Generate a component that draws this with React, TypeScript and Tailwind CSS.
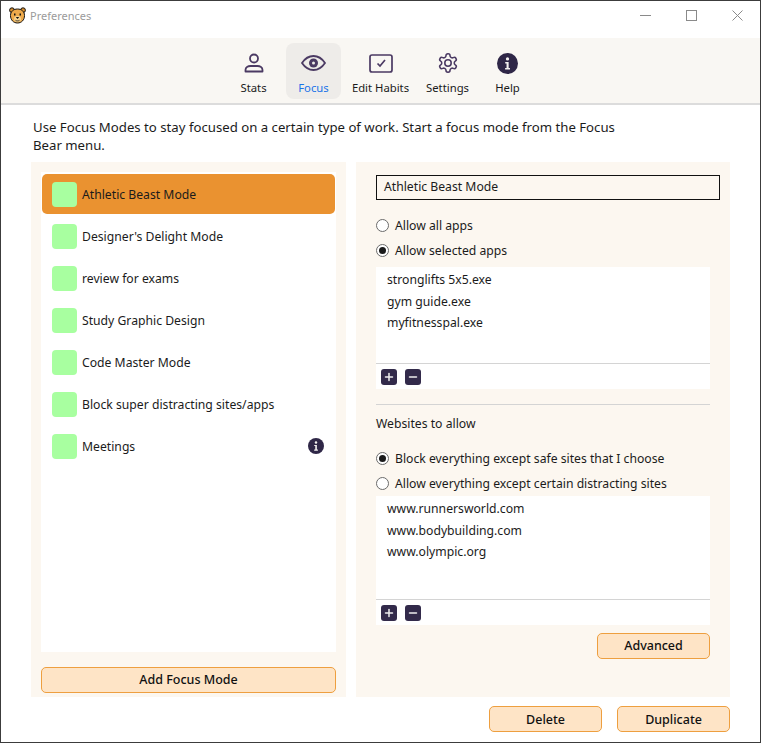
import React from 'react';
import { Minus, Plus } from 'lucide-react';

const MODES = [
  'Athletic Beast Mode',
  "Designer's Delight Mode",
  'review for exams',
  'Study Graphic Design',
  'Code Master Mode',
  'Block super distracting sites/apps',
  'Meetings',
];

const APPS = ['stronglifts 5x5.exe', 'gym guide.exe', 'myfitnesspal.exe'];
const SITES = ['www.runnersworld.com', 'www.bodybuilding.com', 'www.olympic.org'];

function BearLogo() {
  return (
    <svg width="17" height="17" viewBox="0 0 17 17" className="shrink-0">
      <circle cx="3" cy="3.200" r="2.400" fill="#d98f2e" stroke="#111" strokeWidth="1" />
      <circle cx="14" cy="3.200" r="2.400" fill="#d98f2e" stroke="#111" strokeWidth="1" />
      <path d="M1.500 8.500c0-4 3-6.500 7-6.500s7 2.500 7 6.500c0 4.500-3 7.500-7 7.500s-7-3-7-7.500z" fill="#eda94a" stroke="#111" strokeWidth="1" />
      <ellipse cx="8.500" cy="12" rx="3.500" ry="3" fill="#f6d28e" />
      <rect x="5" y="6.500" width="1.500" height="2" fill="#111" />
      <rect x="10.500" y="6.500" width="1.500" height="2" fill="#111" />
      <path d="M6.800 10h3.400l-1.700 2z" fill="#111" />
      <path d="M6.500 13.300c1 .8 3 .8 4 0" fill="none" stroke="#111" strokeWidth="0.800" />
    </svg>
  );
}

function InfoDot({ size, className }: { size: number; className?: string }) {
  return (
    <svg width={size} height={size} viewBox="0 0 22 22" className={className}>
      <circle cx="11" cy="11" r="11" fill="#2f2747" />
      <circle cx="11" cy="6.200" r="1.700" fill="#f4f2f0" />
      <path d="M8.600 9.500h3.600v6.300h1.400v1.600H8.500v-1.600h1.500v-4.700H8.600z" fill="#f4f2f0" />
    </svg>
  );
}

function ToolbarItem({ label, active, wide, children }: { label: string; active?: boolean; wide?: boolean; children: React.ReactNode }) {
  return (
    <div
      className={`flex h-[56px] flex-col items-center rounded-lg pt-[6px] ${wide ? 'w-[69px]' : 'w-[55px]'} ${active ? 'bg-[#eeece9] text-[#1a73e8]' : 'text-[#1b1b1b]'}`}
    >
      <div className="flex h-[28px] items-center justify-center">{children}</div>
      <span className="mt-[3px] text-[11.300px] leading-[16px]">{label}</span>
    </div>
  );
}

function Radio({ checked, label }: { checked?: boolean; label: string }) {
  return (
    <label className="flex h-[25px] items-center gap-[6px]">
      <span className="flex h-[13px] w-[13px] shrink-0 items-center justify-center rounded-full border border-[#6b6b6b] bg-white">
        {checked && <span className="h-[7px] w-[7px] rounded-full bg-[#1a1a1a]" />}
      </span>
      <span className="pt-[2px]">{label}</span>
    </label>
  );
}

function SmallButton({ minus }: { minus?: boolean }) {
  return (
    <span className="flex h-[16px] w-[16px] items-center justify-center rounded-[3px] bg-[#322a4a] text-[#eeeeee]">
      {minus ? <Minus size={12} strokeWidth={3} /> : <Plus size={12} strokeWidth={3} />}
    </span>
  );
}

function PickList({ items, height }: { items: string[]; height: string }) {
  return (
    <div className={`flex flex-col bg-white ${height}`}>
      <div className="flex-1 px-[11px] pt-[2px] leading-[21.500px]">
        {items.map((item) => (
          <div key={item}>{item}</div>
        ))}
      </div>
      <div className="flex h-[26px] items-center gap-[8px] border-t border-[#d4d4d4] pl-[5px]">
        <SmallButton />
        <SmallButton minus />
      </div>
    </div>
  );
}

function ActionButton({ label, className }: { label: string; className?: string }) {
  return (
    <button className={`h-[26px] rounded-[5px] border border-[#ee9f3f] bg-[#fee4c6] text-[12.500px] font-medium text-[#111] ${className ?? ''}`}>
      {label}
    </button>
  );
}

export default function App() {
  return (
    <div
      className="relative flex h-[743px] w-[761px] flex-col overflow-hidden border border-[#3c3c3c] bg-white text-[12.200px] text-[#1b1b1b]"
      style={{ fontFamily: '"Noto Sans", "Open Sans", sans-serif' }}
    >
      <div className="absolute top-0 left-[-1px] h-[552px] w-px bg-[#a3a3a3]" />

      {/* title bar */}
      <div className="flex h-[37px] shrink-0 items-start justify-between pl-[8px]">
        <div className="flex items-center gap-[4px] pt-[6px]">
          <BearLogo />
          <span className="text-[11px] leading-[17px] text-[#9b9b9b]">Preferences</span>
        </div>
        <div className="flex text-[#7a7a7a]">
          <div className="flex h-[28px] w-[46px] items-center justify-center">
            <svg width="11" height="1" viewBox="0 0 11 1">
              <rect width="11" height="1" fill="#8a8a8a" />
            </svg>
          </div>
          <div className="flex h-[28px] w-[46px] items-center justify-center">
            <svg width="11" height="11" viewBox="0 0 11 11" fill="none" stroke="#8a8a8a">
              <rect x="0.500" y="0.500" width="10" height="10" />
            </svg>
          </div>
          <div className="flex h-[28px] w-[46px] items-center justify-center">
            <svg width="11" height="11" viewBox="0 0 11 11" fill="none" stroke="#8a8a8a">
              <path d="M0.500 0.500l10 10M10.500 0.500l-10 10" />
            </svg>
          </div>
        </div>
      </div>

      {/* toolbar */}
      <div className="flex h-[67px] shrink-0 items-start justify-center gap-[5px] border-b-2 border-[#dcdcdc] bg-[#f9f7f3] pt-[5px]">
        <ToolbarItem label="Stats">
          <svg width="20" height="20" viewBox="0 0 20 20" fill="none" stroke="#4b3a63" strokeWidth="1.800">
            <circle cx="10" cy="5.500" r="4" />
            <path d="M1.500 18.500v-1.500c0-2.500 2.500-4 5-4h7c2.500 0 5 1.500 5 4v1.500z" strokeLinejoin="round" />
          </svg>
        </ToolbarItem>
        <ToolbarItem label="Focus" active>
          <svg width="25" height="16" viewBox="0 0 25 16" fill="none" stroke="#4b3a63" strokeWidth="1.800">
            <path d="M1 8C4 3.500 8 1 12.500 1S21 3.500 24 8c-3 4.500-7 7-11.500 7S4 12.500 1 8z" />
            <circle cx="12.500" cy="8" r="4.500" fill="#4b3a63" stroke="none" />
            <circle cx="12.500" cy="8" r="1.500" fill="#eeece9" stroke="none" />
          </svg>
        </ToolbarItem>
        <ToolbarItem label="Edit Habits" wide>
          <svg width="24" height="19" viewBox="0 0 24 19" fill="none" stroke="#4b3a63" strokeWidth="1.700">
            <rect x="1" y="1" width="22" height="17" rx="2" />
            <path d="M8.500 9.500l2.500 2.500 5-6" />
          </svg>
        </ToolbarItem>
        <ToolbarItem label="Settings">
          <svg width="22" height="22" viewBox="0 0 24 24" fill="none" stroke="#4b3a63" strokeWidth="1.700" strokeLinejoin="round">
            <path d="M12.220 2h-.440a2 2 0 0 0-2 2v.180a2 2 0 0 1-1 1.730l-.430.250a2 2 0 0 1-2 0l-.150-.080a2 2 0 0 0-2.730.730l-.220.380a2 2 0 0 0 .730 2.730l.150.100a2 2 0 0 1 1 1.720v.510a2 2 0 0 1-1 1.740l-.150.090a2 2 0 0 0-.730 2.730l.220.380a2 2 0 0 0 2.730.730l.150-.080a2 2 0 0 1 2 0l.430.250a2 2 0 0 1 1 1.730V20a2 2 0 0 0 2 2h.440a2 2 0 0 0 2-2v-.180a2 2 0 0 1 1-1.730l.430-.250a2 2 0 0 1 2 0l.150.080a2 2 0 0 0 2.730-.730l.220-.390a2 2 0 0 0-.730-2.730l-.150-.080a2 2 0 0 1-1-1.740v-.500a2 2 0 0 1 1-1.740l.150-.090a2 2 0 0 0 .730-2.730l-.220-.380a2 2 0 0 0-2.730-.730l-.150.080a2 2 0 0 1-2 0l-.430-.250a2 2 0 0 1-1-1.730V4a2 2 0 0 0-2-2z" />
            <circle cx="12" cy="12" r="3.500" />
          </svg>
        </ToolbarItem>
        <ToolbarItem label="Help">
          <InfoDot size={21} />
        </ToolbarItem>
      </div>

      {/* intro */}
      <p className="w-[630px] shrink-0 pt-[13px] pl-[32px] text-[13.200px] leading-[18px]">
        Use Focus Modes to stay focused on a certain type of work. Start a focus mode from the Focus Bear menu.
      </p>

      {/* panels */}
      <div className="mt-[8px] flex shrink-0 gap-[10px] pl-[30px]">
        <div className="flex h-[535px] w-[315px] flex-col bg-[#fcf7f0] px-[10px] pt-[10px]">
          <div className="h-[480px] bg-white px-px pt-[2px]">
            {MODES.map((mode, i) => (
              <div
                key={mode}
                className={`flex h-[40px] items-center rounded-[5px] pl-[10px] pr-[11px] ${i > 0 ? 'mt-[2px]' : ''} ${i === 0 ? 'bg-[#ea9230]' : ''}`}
              >
                <span className="h-[25px] w-[25px] rounded-[4px] bg-[#a8ffa0]" />
                <span className="ml-[5px] flex-1 pt-[2px]">{mode}</span>
                {mode === 'Meetings' && <InfoDot size={16} />}
              </div>
            ))}
          </div>
          <ActionButton label="Add Focus Mode" className="mt-[15px] w-full" />
        </div>

        <div className="flex h-[535px] w-[374px] flex-col bg-[#fcf7f0] pl-[20px] pr-[10px] pt-[13px]">
          <div className="flex h-[25px] items-center border border-[#111] pl-[7px]">Athletic Beast Mode</div>
          <div className="mt-[13px]">
            <Radio label="Allow all apps" />
            <Radio checked label="Allow selected apps" />
          </div>
          <div className="mt-[4px] mr-[10px]">
            <PickList items={APPS} height="h-[122px]" />
          </div>
          <div className="mt-[15px] mr-[10px] border-t border-[#d4d4d4]" />
          <div className="mt-[10px] h-[17px] leading-[18px]">Websites to allow</div>
          <div className="mt-[14px]">
            <Radio checked label="Block everything except safe sites that I choose" />
            <Radio label="Allow everything except certain distracting sites" />
          </div>
          <div className="mr-[10px]">
            <PickList items={SITES} height="h-[129px]" />
          </div>
          <div className="mt-[8px] mr-[10px] flex justify-end">
            <ActionButton label="Advanced" className="w-[113px]" />
          </div>
        </div>
      </div>

      {/* footer */}
      <div className="mt-[9px] flex justify-end gap-[15px] pr-[30px]">
        <ActionButton label="Delete" className="w-[113px] pt-[2px]" />
        <ActionButton label="Duplicate" className="w-[113px] pt-[2px]" />
      </div>
    </div>
  );
}
